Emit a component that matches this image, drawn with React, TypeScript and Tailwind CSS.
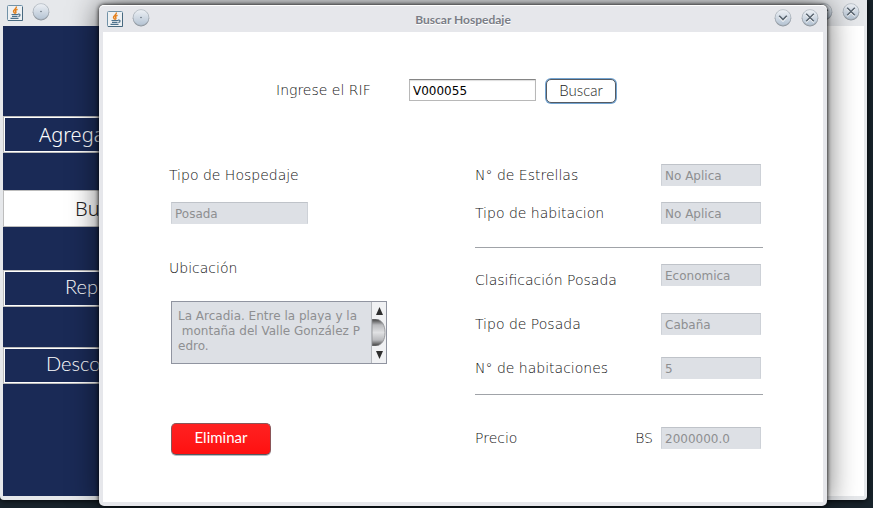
import type { ReactNode } from 'react';

const labelText = "font-['DejaVu_Sans',sans-serif] font-extralight text-sm leading-5 text-[#111111]";

function JavaIcon() {
  return (
    <svg width="16" height="16" viewBox="0 0 16 16" aria-hidden="true">
      <rect x="0.5" y="0.5" width="15" height="15" rx="1" fill="#eef1f3" stroke="#7192a8" />
      <path d="M1 15.5h14.5V2" fill="none" stroke="#48697f" />
      <path d="M9.300 1.500C10.200 3.500 6.200 4.600 6.500 6.400c.1 1 1.200 1.400 1.400 2.300M10.600 4.400C8.400 5 8 5.800 8.700 6.500c.6.700.2 1.500-.6 2" fill="none" stroke="#e5801c" strokeWidth="1.400" />
      <path d="M4.500 9.500h6.500M5 11.300h5.500M3.500 13.400h8M11 9.200c2.800-.6 2.600 2 .3 2.300" fill="none" stroke="#4d718b" strokeWidth="1.200" />
    </svg>
  );
}

type Glyph = 'dot' | 'down' | 'close';

function RoundButton({ glyph, label }: { glyph: Glyph; label: string }) {
  return (
    <button type="button" aria-label={label} className="block size-[18px] rounded-full">
      <svg width="18" height="18" viewBox="0 0 18 18">
        <defs>
          <linearGradient id={`face-${glyph}`} x1="0" y1="0" x2="0" y2="1">
            <stop offset="0" stopColor="#eef1f5" />
            <stop offset="1" stopColor="#b4c3d3" />
          </linearGradient>
        </defs>
        <circle cx="9" cy="9.300" r="8.200" fill="#8a9199" />
        <circle cx="9" cy="8.500" r="7.900" fill={`url(#face-${glyph})`} stroke="#a5adb6" strokeWidth="0.600" />
        {glyph === 'dot' && <circle cx="9" cy="8.500" r="0.800" fill="#69747f" />}
        {glyph === 'down' && (
          <>
            <path d="M5.200 8 9 11.800 12.800 8" fill="none" stroke="#fff" strokeWidth="1.600" />
            <path d="M5.200 6.800 9 10.600l3.800-3.800" fill="none" stroke="#596570" strokeWidth="1.600" />
          </>
        )}
        {glyph === 'close' && (
          <>
            <path d="m5.200 5.700 7.600 7.600m0-7.600-7.600 7.600" fill="none" stroke="#fff" strokeWidth="1.500" />
            <path d="m5.200 4.700 7.600 7.600m0-7.600-7.600 7.600" fill="none" stroke="#596570" strokeWidth="1.500" />
          </>
        )}
      </svg>
    </button>
  );
}

function TitleBar({ title }: { title?: string }) {
  return (
    <header className="flex h-[27px] shrink-0 items-center px-1">
      <div className="flex flex-1 items-center gap-[9px]">
        <JavaIcon />
        <div className="pb-[2px]">
          <RoundButton glyph="dot" label="Fijar ventana" />
        </div>
      </div>
      <h1 className="pt-[2px] font-['Lato',sans-serif] text-xs font-bold text-[#7a7d86] [text-shadow:0_1px_0_#fff]">{title}</h1>
      <div className="flex flex-1 items-center justify-end gap-[9px] pb-[2px]">
        <RoundButton glyph="down" label="Minimizar" />
        <RoundButton glyph="close" label="Cerrar" />
      </div>
    </header>
  );
}

function MenuButton({ active, className, children }: { active?: boolean; className: string; children: ReactNode }) {
  return (
    <button
      type="button"
      className={`h-[37px] w-full border border-[#bdbdbd] text-left text-xl leading-none ${
        active ? 'bg-white text-[#222222]' : 'bg-[#1a2a56] text-white shadow-[inset_0_0_0_1px_#ffffff]'
      } ${className}`}
    >
      {children}
    </button>
  );
}

function DisabledField({ id, value, className }: { id: string; value: string; className: string }) {
  return (
    <input
      id={id}
      disabled
      defaultValue={value}
      className={`h-[22px] border border-t-[#bfc3c9] border-r-[#cdd1d7] border-b-[#dde0e5] border-l-[#cdd1d7] bg-[#dde0e5] px-[3px] pt-[2px] font-['DejaVu_Sans',sans-serif] text-xs text-[#8e8f91] ${className}`}
    />
  );
}

function FieldRow({ id, label, value, unit }: { id: string; label: string; value: string; unit?: string }) {
  return (
    <div className="flex items-center pr-[2px]">
      <label htmlFor={id} className={`flex-1 ${labelText}`}>{label}</label>
      {unit && <span className={`mr-2 ${labelText}`}>{unit}</span>}
      <DisabledField id={id} value={value} className="w-[100px]" />
    </div>
  );
}

export default function App() {
  return (
    <div className="relative h-screen w-full overflow-hidden bg-[#18232b]">
      <section className="absolute top-0 right-[6px] bottom-2 left-0 flex flex-col rounded-b-[4px] bg-[#e6e8eb] px-[3px] pb-1 shadow-[0_0_6px_#000]">
        <div className="-mt-px">
          <TitleBar />
        </div>
        <div className="flex min-h-0 flex-1 bg-white">
          <nav className="w-[212px] bg-[#1a2a56] pt-[90px]">
            <MenuButton className="pl-[35px] font-['Noto_Sans',sans-serif] font-light">Agrega</MenuButton>
            <div className="mt-[37px]">
              <MenuButton active className="pl-[71px] font-['Noto_Sans',sans-serif] font-light">Bus</MenuButton>
            </div>
            <div className="mt-[43px]">
              <MenuButton className="pb-[5px] pl-[61px] font-['Lato',sans-serif] font-light">Rep</MenuButton>
            </div>
            <div className="mt-10">
              <MenuButton className="pb-[5px] pl-[42px] font-['Lato',sans-serif] font-light">Desco</MenuButton>
            </div>
          </nav>
        </div>
      </section>

      <section className="absolute top-[5px] right-[46px] bottom-[2px] left-[99px] flex flex-col rounded-[5px] bg-[#e6e7eb] px-1 pb-1 shadow-[0_0_4px_#000,0_0_30px_rgba(0,0,0,0.6),inset_0_1px_0_#ffffff]">
        <TitleBar title="Buscar Hospedaje" />
        <main className="min-h-0 flex-1 bg-white">
          <form className="flex items-start pt-[47px] pl-[173px]">
            <label htmlFor="rif" className={`w-[133px] pt-px ${labelText}`}>Ingrese el RIF</label>
            <input
              id="rif"
              defaultValue="V000055"
              className="h-[22px] w-[127px] border border-[#b8b8b8] border-t-[#858585] bg-white px-[3px] pt-[2px] font-['DejaVu_Sans',sans-serif] text-xs text-black shadow-[inset_0_1px_1px_#dddddd]"
            />
            <button
              type="button"
              className="ml-[10px] h-6 w-[70px] rounded-[5px] border border-[#555b63] bg-white pb-[2px] font-['Lato',sans-serif] text-[15px] leading-none font-light text-[#222222] shadow-[0_0_0_1px_#73a4d1]"
            >
              Buscar
            </button>
          </form>

          <div className="flex justify-between pt-[61px] pr-[60px] pl-[66px]">
            <div className="flex w-[218px] flex-col items-start pt-px">
              <label htmlFor="tipo" className={labelText}>Tipo de Hospedaje</label>
              <div className="mt-[17px] flex pl-[2px]">
                <DisabledField id="tipo" value="Posada" className="w-[137px]" />
              </div>
              <label htmlFor="ubicacion" className={`mt-[34px] ${labelText}`}>Ubicación</label>
              <div className="mt-[23px] ml-[2px] flex h-[63px] w-[216px] border border-[#9094a0] bg-[#dde0e5]">
                <textarea
                  id="ubicacion"
                  disabled
                  wrap="off"
                  defaultValue={'La Arcadia. Entre la playa y la\n montaña del Valle González P\nedro.'}
                  className="min-w-0 flex-1 resize-none overflow-hidden pt-[7px] pl-[6px] font-['DejaVu_Sans',sans-serif] text-xs leading-[15px] text-[#8e8f91]"
                />
                <div className="flex w-[15px] flex-col items-center justify-between border-l border-[#b5b8bd] bg-[#f0f1f3]">
                  <button type="button" aria-label="Subir" className="flex h-[17px] items-center">
                    <svg width="7" height="8" viewBox="0 0 7 8"><path d="M3.500 0 7 8H0z" fill="#2e2e2e" /></svg>
                  </button>
                  <svg width="14" height="27" viewBox="0 0 14 27" aria-hidden="true">
                    <defs>
                      <linearGradient id="thumb" x1="0" y1="0" x2="0" y2="1">
                        <stop offset="0" stopColor="#3c3c3c" />
                        <stop offset="0.220" stopColor="#b9babd" />
                        <stop offset="0.500" stopColor="#e0e1e3" />
                        <stop offset="0.780" stopColor="#b9babd" />
                        <stop offset="1" stopColor="#3c3c3c" />
                      </linearGradient>
                    </defs>
                    <path d="M0 0h4c6 1 9 6 9 13.500S10 26 4 27H0z" fill="url(#thumb)" stroke="#8b8d91" strokeWidth="0.800" />
                  </svg>
                  <button type="button" aria-label="Bajar" className="flex h-[17px] items-center">
                    <svg width="7" height="8" viewBox="0 0 7 8"><path d="M0 0h7L3.500 8z" fill="#2e2e2e" /></svg>
                  </button>
                </div>
              </div>
              <button
                type="button"
                className="mt-[59px] ml-[2px] h-8 w-[100px] rounded-[5px] border border-[#8a5558] border-b-[#56595f] bg-linear-to-b from-[#ff2020] to-[#ff1010] pb-[3px] font-['Lato',sans-serif] text-[15px] leading-none text-white shadow-[0_1px_0_#b9bcc2]"
              >
                Eliminar
              </button>
            </div>

            <div className="w-[288px]">
              <div className="flex flex-col gap-4">
                <FieldRow id="estrellas" label="N° de Estrellas" value="No Aplica" />
                <FieldRow id="habitacion" label="Tipo de habitacion" value="No Aplica" />
              </div>
              <hr className="mt-[23px] border-[#a0a3a8]" />
              <div className="mt-4 flex flex-col gap-[22px]">
                <div className="flex items-start pr-[2px] pb-[5px]">
                  <label htmlFor="clasificacion" className={`-mb-[6px] flex-1 pt-[6px] ${labelText}`}>Clasificación Posada</label>
                  <DisabledField id="clasificacion" value="Economica" className="w-[100px]" />
                </div>
                <FieldRow id="posada" label="Tipo de Posada" value="Cabaña" />
                <FieldRow id="habitaciones" label="N° de habitaciones" value="5" />
              </div>
              <hr className="mt-[15px] mb-8 border-[#a0a3a8]" />
              <FieldRow id="precio" label="Precio" unit="BS" value="2000000.0" />
            </div>
          </div>
        </main>
      </section>
    </div>
  );
}
